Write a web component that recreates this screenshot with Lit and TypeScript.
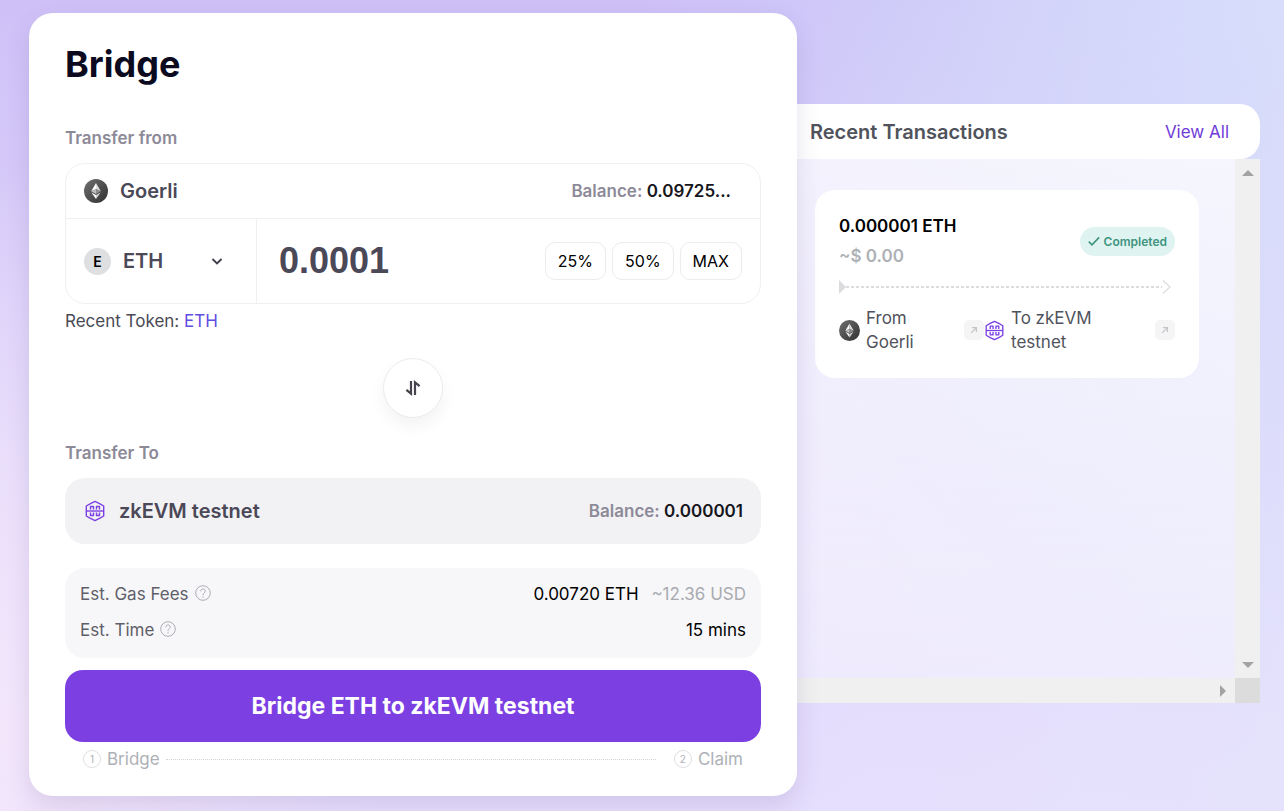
import { LitElement, html, css } from "lit";
import { customElement, state } from "lit/decorators.js";

@customElement("eth-icon")
class EthIcon extends LitElement {
  static styles = css`
    :host { display: block; flex: none; width: 24px; height: 24px; }
    svg { display: block; width: 100%; height: 100%; }
  `;
  render() {
    return html`<svg viewBox="0 0 24 24" aria-hidden="true">
      <defs>
        <linearGradient id="g" x1="0" y1="0" x2="1" y2="1">
          <stop offset="0" stop-color="#707070" />
          <stop offset="1" stop-color="#303030" />
        </linearGradient>
      </defs>
      <circle cx="12" cy="12" r="12" fill="url(#g)" />
      <path d="M12 4 7.2 12.2 12 10z" fill="#fff" />
      <path d="M12 4l4.8 8.2L12 10z" fill="#dedede" />
      <path d="M7.2 12.2 12 10v5z" fill="#bdbdbd" />
      <path d="M16.8 12.2 12 10v5z" fill="#8e8e8e" />
      <path d="M7.4 13.4 12 16.1V20z" fill="#fff" />
      <path d="M16.6 13.4 12 16.1V20z" fill="#d5d5d5" />
    </svg>`;
  }
}

@customElement("zkevm-icon")
class ZkevmIcon extends LitElement {
  static styles = css`
    :host { display: block; flex: none; width: 22px; height: 22px; }
    svg { display: block; width: 100%; height: 100%; }
  `;
  render() {
    return html`<svg viewBox="0 0 22 22" fill="none" stroke="#7b3fe4" stroke-width="1.4" stroke-linejoin="round" aria-hidden="true">
      <path d="M11 1.4 15.5 3.6 19.7 6v10l-4.2 2.4L11 20.6 6.5 18.4 2.3 16V6l4.2-2.4z" />
      <path d="M2.3 11h17.4" />
      <path d="M6.5 9.5V6.5h3V9.500M12.500 9.500V6.500h3V9.500M6.500 12.500v3h3v-3M12.500 12.500v3h3v-3" />
    </svg>`;
  }
}

const helpIcon = html`<svg class="help" viewBox="0 0 16 16" fill="none" stroke="#a4a4ae" aria-hidden="true">
  <circle cx="8" cy="8" r="7.3" stroke-width="0.9" />
  <path d="M5.7 6.3c0-1.5 1-2.4 2.3-2.4s2.3 1 2.3 2.2c0 1.8-2.3 1.9-2.3 3.7v.4M8 11.3v1.2" stroke-width="0.9" />
</svg>`;

const linkIcon = html`<svg viewBox="0 0 20 20" fill="none" stroke="#c3c5c9" stroke-width="1.2" aria-hidden="true">
  <path d="M7.200 12.800 12.200 7.800M8 7.600h4.400V12" />
</svg>`;

@customElement("bridge-form")
class BridgeForm extends LitElement {
  @state() amount = "0.0001";

  static styles = css`
    :host { display: block; }
    * { box-sizing: border-box; }
    button, input, select { font: inherit; color: inherit; margin: 0; }
    .card {
      padding: 27px 36px 25px;
      background: #fff;
      border-radius: 24px;
      box-shadow: 0 10px 24px rgba(80, 60, 130, 0.14);
    }
    h1 { margin: 0 0 38px; font-size: 36px; line-height: 48px; font-weight: 700; color: #0b0a1f; }
    .label { margin: 0 0 13px; font-size: 17px; line-height: 24px; font-weight: 600; color: #8d8a98; }
    .from { border: 1px solid #f0f0f2; border-radius: 20px; }
    .network { display: flex; align-items: center; justify-content: space-between; }
    .from .network { height: 54px; padding: 0 29px 0 18px; }
    .name { display: flex; align-items: center; gap: 12px; font-size: 20px; line-height: 28px; font-weight: 600; color: #4b4858; }
    .balance { font-size: 17px; line-height: 24px; font-weight: 600; color: #8d8a98; }
    .balance b { font-weight: 600; color: #16161c; }
    .entry { display: flex; border-top: 1px solid #f0f0f2; height: 85px; }
    .token { display: flex; align-items: center; flex: none; width: 191px; padding: 0 32px 0 18px; border-right: 1px solid #f0f0f2; }
    .avatar { display: grid; place-items: center; flex: none; width: 27px; height: 27px; border-radius: 50%; background: #dedfe1; color: #000; font-size: 14px; font-weight: 600; }
    .token select { appearance: none; border: 0; background: none; flex: 1; min-width: 0; padding: 0 0 0 12px; font-size: 20px; line-height: 28px; font-weight: 600; color: #4b4858; }
    .chevron { flex: none; width: 14px; height: 14px; pointer-events: none; }
    .amount { flex: 1; min-width: 0; padding: 0 22px; border: 0; background: none; outline: 0; font-family: "Liberation Sans", Arial, sans-serif; font-size: 36px; font-weight: 700; color: #4b4858; }
    .chips { display: flex; align-items: center; gap: 6px; padding-right: 18px; }
    .chips button { height: 38px; padding: 0 12px; border: 1px solid #ececf0; border-radius: 10px; background: #fff; font-size: 16px; color: #000; }
    .recent { margin: 5px 0 25px; font-size: 17px; line-height: 24px; color: #4a4a55; }
    .recent a { color: #5f4ee0; text-decoration: none; }
    .swap { display: grid; place-items: center; width: 60px; height: 60px; margin: 0 auto 23px; padding: 0; border: 1px solid #ececf0; border-radius: 50%; background: #fff; box-shadow: 0 8px 16px rgba(0, 0, 0, 0.05); }
    .swap svg { width: 18px; height: 18px; }
    .to { height: 66px; padding: 0 18px 0 19px; border-radius: 20px; background: #f2f2f5; }
    .to .name { gap: 13px; }
    .fees { margin: 24px 0 12px; padding: 8px 15px 10px; border-radius: 20px; background: #f7f7f9; font-size: 17px; line-height: 24px; }
    .fee { display: flex; align-items: center; justify-content: space-between; height: 36px; color: #5f5f69; }
    .fee dt { display: flex; align-items: center; gap: 6px; }
    .fee dd { margin: 0; color: #000; }
    .fee dd span { margin-left: 8px; color: #a9abb0; }
    .help { width: 16px; height: 16px; margin-bottom: 3px; }
    .submit { display: block; width: 100%; height: 72px; border: 0; border-radius: 18px; background: #7c3fe2; color: #fff; font-size: 23px; font-weight: 700; }
    .steps { display: flex; align-items: center; gap: 6px; list-style: none; margin: 5px 0 0; padding: 0 18px; font-size: 17px; line-height: 24px; color: #aeb1b6; }
    .steps li { display: flex; align-items: center; gap: 6px; }
    .num { display: grid; place-items: center; width: 18px; height: 18px; border: 1px solid #dfe0e3; border-radius: 50%; font-size: 10px; line-height: 16px; }
    .steps .line { flex: 1; border-top: 1px dotted #d4d5d9; margin-right: 12px; }
  `;

  render() {
    return html`
      <section class="card">
        <h1>Bridge</h1>
        <p class="label">Transfer from</p>
        <div class="from">
          <div class="network">
            <div class="name"><eth-icon></eth-icon>Goerli</div>
            <div class="balance">Balance: <b>0.09725...</b></div>
          </div>
          <div class="entry">
            <div class="token">
              <span class="avatar">E</span>
              <select aria-label="Token"><option>ETH</option></select>
              <svg class="chevron" viewBox="0 0 14 14" fill="none" stroke="#3f3c4c" stroke-width="1.8" aria-hidden="true"><path d="m2.5 5 4.5 4.5L11.5 5" /></svg>
            </div>
            <input class="amount" aria-label="Amount" .value=${this.amount}
              @input=${(e: Event) => (this.amount = (e.target as HTMLInputElement).value)} />
            <div class="chips">
              ${["25%", "50%", "MAX"].map((t) => html`<button type="button">${t}</button>`)}
            </div>
          </div>
        </div>
        <p class="recent">Recent Token: <a href="#">ETH</a></p>
        <button class="swap" type="button" aria-label="Swap networks">
          <svg viewBox="0 0 18 18" fill="none" stroke="#46434f" stroke-width="2.2" aria-hidden="true">
            <path d="M7 2v12.6L2.4 10.8M11 16V3.4L15.6 7.2" />
          </svg>
        </button>
        <p class="label">Transfer To</p>
        <div class="network to">
          <div class="name"><zkevm-icon></zkevm-icon>zkEVM testnet</div>
          <div class="balance">Balance: <b>0.000001</b></div>
        </div>
        <dl class="fees">
          <div class="fee"><dt>Est. Gas Fees ${helpIcon}</dt><dd>0.00720 ETH <span>~12.36 USD</span></dd></div>
          <div class="fee"><dt>Est. Time ${helpIcon}</dt><dd>15 mins</dd></div>
        </dl>
        <button class="submit" type="button">Bridge ETH to zkEVM testnet</button>
        <ol class="steps">
          <li><span class="num">1</span>Bridge</li>
          <li class="line" role="presentation"></li>
          <li><span class="num">2</span>Claim</li>
        </ol>
      </section>
    `;
  }
}

@customElement("recent-transactions")
class RecentTransactions extends LitElement {
  static styles = css`
    :host { display: block; }
    * { box-sizing: border-box; }
    a { text-decoration: none; }
    header { display: flex; align-items: center; justify-content: space-between; height: 55px; padding: 0 31px 0 13px; background: #fff; border-radius: 0 20px 20px 0; }
    h2 { margin: 0; font-size: 20px; line-height: 28px; font-weight: 600; color: #50535c; }
    .all { font-size: 17px; line-height: 24px; color: #6f3bd8; }
    .body { display: grid; grid-template-columns: minmax(0, 1fr) 25px; grid-template-rows: 519px 25px; background: linear-gradient(#ffffffc0, #ffffff66); border-top-right-radius: 1px; }
    .list { padding: 31px 36px 31px 18px; }
    .bar { display: flex; justify-content: space-between; background: #f0f0f0; }
    .vertical { flex-direction: column; align-items: center; padding: 11px 0 10px; }
    .horizontal { align-items: center; justify-content: flex-end; padding-right: 9px; }
    .bar svg { display: block; fill: #a3a3a3; }
    .corner { background: #dcdcdc; }
    .tx { padding: 24px; background: #fff; border-radius: 20px; }
    .top { display: flex; align-items: center; justify-content: space-between; }
    .value { font-size: 17px; line-height: 24px; font-weight: 600; color: #000; }
    .fiat { margin-top: 6px; font-size: 17px; line-height: 24px; font-weight: 600; color: #adb1b6; }
    .tag { display: flex; align-items: center; gap: 4px; height: 29px; padding: 0 8px; border-radius: 15px; background: #dff4f0; color: #3f937f; font-size: 12px; font-weight: 600; }
    .tag svg { width: 12px; height: 12px; }
    .track { display: flex; align-items: center; margin: 12px 4px 12px 0; height: 14px; }
    .track svg { flex: none; display: block; height: 14px; }
    .dash { flex: 1; height: 2px; background: repeating-linear-gradient(90deg, #dcdcdf 0 3px, transparent 3px 5px); }
    .route { display: grid; grid-template-columns: minmax(0, 145fr) minmax(0, 191fr); font-size: 17px; line-height: 24px; color: #50535c; }
    .end { display: flex; align-items: center; gap: 6px; }
    .end eth-icon, .end zkevm-icon { width: 21px; height: 21px; }
    .end span { flex: 1; }
    .end a { width: 20px; height: 20px; border-radius: 5px; background: #f5f5f6; }
    .end a svg { display: block; }
  `;

  render() {
    return html`
      <header><h2>Recent Transactions</h2><a class="all" href="#">View All</a></header>
      <div class="body">
        <div class="list">
          <article class="tx">
            <div class="top">
              <div>
                <div class="value">0.000001 ETH</div>
                <div class="fiat">~$ 0.00</div>
              </div>
              <div class="tag">
                <svg viewBox="0 0 12 12" fill="none" stroke="currentColor" stroke-width="1.6" aria-hidden="true"><path d="M.8 6.6 4 9.8 11.2 2.4" /></svg>
                Completed
              </div>
            </div>
            <div class="track" aria-hidden="true">
              <svg width="7" viewBox="0 0 7 14" fill="#dcdcdf"><path d="M0 0l7 7-7 7z" /></svg>
              <div class="dash"></div>
              <svg width="9" viewBox="0 0 9 14" fill="none" stroke="#dcdcdf" stroke-width="1.2"><path d="M1 .5 8 7l-7 6.5" /></svg>
            </div>
            <div class="route">
              <div class="end"><eth-icon></eth-icon><span>From<br />Goerli</span><a href="#" aria-label="Open source transaction">${linkIcon}</a></div>
              <div class="end"><zkevm-icon></zkevm-icon><span>To zkEVM<br />testnet</span><a href="#" aria-label="Open target transaction">${linkIcon}</a></div>
            </div>
          </article>
        </div>
        <div class="bar vertical" aria-hidden="true">
          <svg width="12" height="6"><path d="M0 6 6 0l6 6z" /></svg>
          <svg width="12" height="6"><path d="M0 0h12L6 6z" /></svg>
        </div>
        <div class="bar horizontal" aria-hidden="true">
          <svg width="6" height="12"><path d="M0 0l6 6-6 6z" /></svg>
        </div>
        <div class="corner"></div>
      </div>
    `;
  }
}

@customElement("app-root")
class AppRoot extends LitElement {
  static styles = css`
    :host {
      display: grid;
      grid-template-columns: minmax(0, 768fr) minmax(0, 463fr);
      align-items: start;
      box-sizing: border-box;
      min-height: 100vh;
      padding: 13px 24px 15px 29px;
      font-family: Inter, "Liberation Sans", sans-serif;
      background:
        linear-gradient(90deg, rgba(228, 230, 251, 0) 60%, rgba(228, 230, 251, 0.5)),
        radial-gradient(ellipse 50% 90% at 100% 0, #cbd4fb, rgba(208, 215, 251, 0)),
        radial-gradient(ellipse 30% 70% at 0 90%, #f3e6fb, rgba(240, 228, 251, 0)),
        linear-gradient(180deg, #cfc1f7, #e2dafc 70%, #e6defd);
    }
    bridge-form { position: relative; z-index: 1; }
    recent-transactions { margin-top: 91px; }
  `;
  render() {
    return html`<bridge-form></bridge-form><recent-transactions></recent-transactions>`;
  }
}
